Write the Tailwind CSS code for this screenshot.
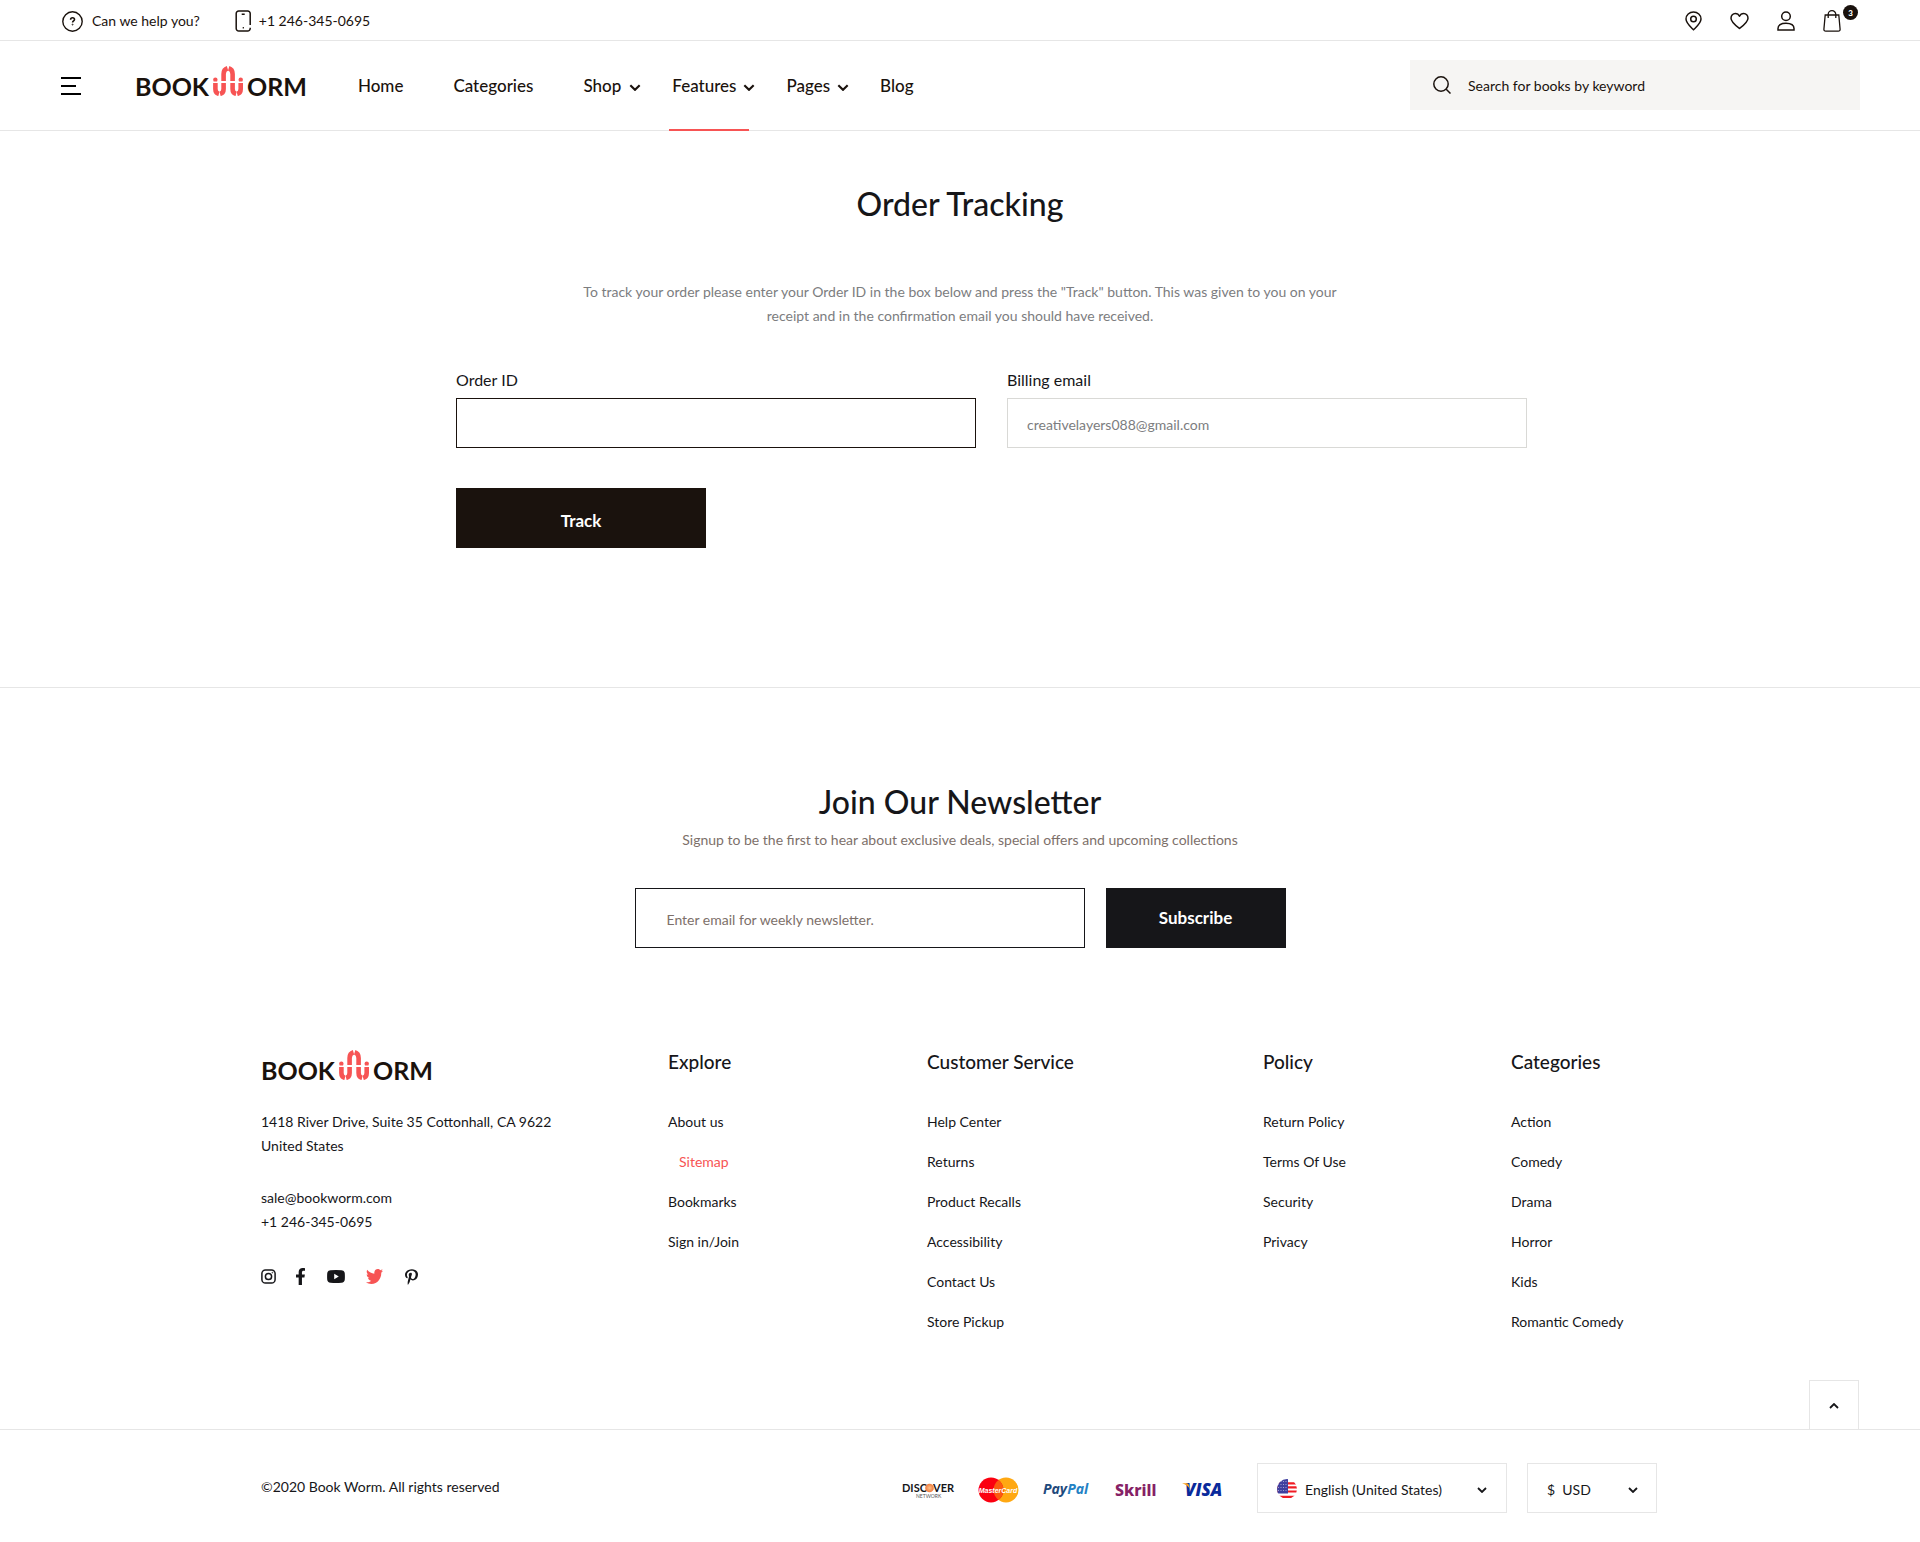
<!DOCTYPE html>
<html lang="en">
<head>
<meta charset="utf-8">
<meta name="viewport" content="width=device-width, initial-scale=1">
<title>Order Tracking – Book Worm</title>
<script src="https://cdn.jsdelivr.net/npm/@tailwindcss/browser@4"></script>
</head>
<body class="bg-white font-['Lato',sans-serif] text-sm leading-6 text-[#161619]">

<!-- Shared symbols -->
<svg class="hidden" aria-hidden="true">
  <symbol id="worm" viewBox="0 0 30 30">
    <g fill="none" stroke="#f75454" stroke-width="4.6">
      <path d="M10.600 15V8c0-3 1.300-5 3.900-5.800"/>
      <path d="M19.600 15V8c0-3-1.300-5-3.900-5.800"/>
      <path d="M2.400 17v6c0 2.700 1.200 4.300 3.500 4.900"/>
      <path d="M10.600 17v6c0 2.700-1.200 4.300-3.500 4.900"/>
      <path d="M19.600 17v6c0 2.700 1.200 4.300 3.500 4.900"/>
      <path d="M27.700 17v6c0 2.700-1.200 4.300-3.500 4.900"/>
    </g>
    <g fill="#f75454">
      <path d="M.15 13.800a2.200 2.200 0 0 1 4.400 0l-.5 1.700H.65z"/>
      <path d="M25.500 13.800a2.200 2.200 0 0 1 4.400 0l-.5 1.700h-3.400z"/>
    </g>
  </symbol>
  <symbol id="chevron" viewBox="0 0 10 6">
    <path d="M1 1l4 4 4-4" fill="none" stroke="currentColor" stroke-width="1.800"/>
  </symbol>
</svg>

<header>
  <div class="flex h-[41px] items-center justify-between border-b border-[#e6e6e6] pt-0.5 pr-[60px] pl-[62px] text-[#1a120d]">
    <div class="flex items-center">
      <a href="#" class="flex items-center gap-[9px]">
        <svg class="size-[21px]" viewBox="0 0 21 21" fill="none" stroke="currentColor" stroke-width="1.400"><circle cx="10.500" cy="10.500" r="9.700"/><path d="M8.600 8.700c0-1.200.8-1.900 1.950-1.900s1.950.7 1.950 1.700c0 1.500-1.900 1.500-1.900 3.100" stroke-width="1.600"/><circle cx="10.600" cy="13.600" r=".5" stroke-width=".9"/></svg>
        <span>Can we help you?</span>
      </a>
      <a href="tel:+12463450695" class="ml-[35px] flex items-center gap-2">
        <svg class="h-[22px] w-4" viewBox="0 0 16 22" fill="none" stroke="currentColor" stroke-width="1.500"><path d="M15.200 15V3.500a2.500 2.500 0 0 0-2.500-2.500h-9A2.500 2.500 0 0 0 1.200 3.500v15A2.500 2.500 0 0 0 3.700 21h9a2.500 2.500 0 0 0 2.500-2.500v-.8"/><path d="M6.700 4.200h3M7.700 17.700h1.200"/></svg>
        <span>+1 246-345-0695</span>
      </a>
    </div>
    <div class="flex items-center gap-7">
      <a href="#" aria-label="Store locations"><svg class="h-5 w-[17px]" viewBox="0 0 17 20" fill="none" stroke="currentColor" stroke-width="1.500"><path d="M8.500 18.800C5 15.300 1 12 1 8a7.500 7 0 0 1 15 0c0 4-4 7.300-7.500 10.800z"/><circle cx="8.500" cy="8" r="2.800"/></svg></a>
      <a href="#" aria-label="Wishlist"><svg class="h-[18px] w-[19px]" viewBox="0 0 19 18" fill="none" stroke="currentColor" stroke-width="1.500" stroke-linejoin="round"><path d="M9.500 16.500C5 13 1 10 1 6.200 1 3.300 3 1.400 5.300 1.400c1.900 0 3.400 1 4.200 2.900.8-1.900 2.300-2.900 4.200-2.900C16 1.400 18 3.300 18 6.200c0 3.800-4 6.800-8.500 10.300z"/></svg></a>
      <a href="#" aria-label="Account"><svg class="h-5 w-[18px]" viewBox="0 0 18 20" fill="none" stroke="currentColor" stroke-width="1.500"><circle cx="9" cy="5.200" r="4.300"/><path d="M1 19v-1.500C1 14 3.800 12.200 9 12.200s8 1.800 8 5.300V19z"/></svg></a>
      <a href="#" aria-label="Cart, 3 items" class="relative mr-[19px]">
        <svg class="h-[22px] w-[18px]" viewBox="0 0 18 22" fill="none" stroke="currentColor" stroke-width="1.300"><path d="M2.200 5h13.600l1.300 14.200c.1 1.200-.6 2-1.800 2H2.700c-1.200 0-1.900-.8-1.800-2z"/><path d="M5.200 8V4.500a3.800 3.800 0 0 1 7.600 0V8"/></svg>
        <span class="absolute -top-[5px] left-5 flex size-[15px] items-center justify-center rounded-full bg-[#1a120d] text-[8px] font-black leading-none text-white">3</span>
      </a>
    </div>
  </div>

  <div class="flex h-[90px] items-center border-b border-[#e6e6e6] pr-[60px] pl-[61px] text-[#1a120d]">
    <button type="button" aria-label="Menu" class="text-black">
      <svg class="h-[18px] w-5" viewBox="0 0 20 18" fill="none" stroke="currentColor" stroke-width="2"><path d="M0 1h20M0 9h15M0 17h20"/></svg>
    </button>
    <a href="#" aria-label="Book Worm" class="mb-2.5 ml-[54px] flex items-end text-[25px] leading-5 font-bold">
      <span>BOOK</span><svg class="mx-1 size-[30px]"><use href="#worm"/></svg><span>ORM</span>
    </a>
    <nav class="ml-[51px] flex h-full items-center text-[17px] font-medium">
      <a href="#">Home</a>
      <a href="#" class="ml-[50px]">Categories</a>
      <a href="#" class="ml-[50px] flex items-center gap-2">Shop <svg class="mt-1 h-[7px] w-3"><use href="#chevron"/></svg></a>
      <a href="#" aria-current="page" class="relative ml-[31px] flex h-full items-center gap-[7px]">Features <svg class="mt-1 h-[7px] w-3"><use href="#chevron"/></svg>
        <span class="absolute -bottom-px -left-[3px] h-0.5 w-20 bg-[#f75454]"></span></a>
      <a href="#" class="ml-[31px] flex items-center gap-[7px]">Pages <svg class="mt-1 h-[7px] w-3"><use href="#chevron"/></svg></a>
      <a href="#" class="ml-[31px]">Blog</a>
    </nav>
    <div class="mb-px ml-auto flex h-[50px] w-[450px] items-center gap-[17px] bg-[#f6f5f3] px-[23px]">
      <svg class="size-[18px] shrink-0" viewBox="0 0 18 18" fill="none" stroke="currentColor" stroke-width="1.500"><circle cx="8" cy="8" r="7.200"/><path d="M13.200 13.200l4.300 4.300"/></svg>
      <input type="search" aria-label="Search" placeholder="Search for books by keyword" class="mt-0.5 w-full bg-transparent outline-none placeholder:text-[#1a120d]">
    </div>
  </div>
</header>

<main class="border-b border-[#e6e6e6] px-6 pt-[53px] pb-[139px]">
  <h1 class="text-center text-[32px] leading-10 font-medium">Order Tracking</h1>
  <p class="mx-auto mt-14 max-w-[780px] text-center text-[#7c7d80]">To track your order please enter your Order ID in the box below and press the "Track" button. This was given to you on your receipt and in the confirmation email you should have received.</p>
  <div class="mt-10 pl-[63px]">
    <form class="mx-auto grid max-w-[1071px] grid-cols-2 gap-x-[31px]">
      <div class="flex flex-col gap-1.5">
        <label for="order-id" class="text-base">Order ID</label>
        <input id="order-id" type="text" class="h-[50px] w-full border border-[#1a120d] px-[19px] pt-0.5 outline-none">
      </div>
      <div class="flex flex-col gap-1.5">
        <label for="billing-email" class="text-base">Billing email</label>
        <input id="billing-email" type="email" placeholder="creativelayers088@gmail.com" class="h-[50px] w-full border border-[#d9d9d6] px-[19px] pt-0.5 outline-none placeholder:text-[#7c7d80]">
      </div>
      <button type="submit" class="mt-10 h-[60px] w-[250px] bg-[#1a120d] pt-1.5 text-[17px] font-bold text-white">Track</button>
    </form>
  </div>
</main>

<section class="px-6 pt-[94px] text-center">
  <h2 class="text-[32px] leading-10 font-medium">Join Our Newsletter</h2>
  <p class="mt-1.5 text-[#7d706a]">Signup to be the first to hear about exclusive deals, special offers and upcoming collections</p>
  <form class="mt-9 flex justify-center gap-[21px]">
    <input type="email" aria-label="Email address" placeholder="Enter email for weekly newsletter." class="h-[60px] w-[450px] border border-[#161619] px-[31px] pt-0.5 outline-none placeholder:text-[#7d706a]">
    <button type="submit" class="h-[60px] w-[180px] bg-[#161619] text-[17px] font-bold text-white">Subscribe</button>
  </form>
</section>

<footer>
  <div class="pr-0.5">
  <div class="mx-auto grid max-w-[1396px] grid-cols-[407fr_259fr_336fr_248fr_146fr] pt-[100px]">
    <div>
      <a href="#" aria-label="Book Worm" class="mt-0.5 flex items-end text-[25px] leading-5 font-bold text-[#1a120d]">
        <span>BOOK</span><svg class="mx-1 size-[30px]"><use href="#worm"/></svg><span>ORM</span>
      </a>
      <address class="mt-[30px] not-italic">1418 River Drive, Suite 35 Cottonhall, CA 9622<br>United States</address>
      <p class="mt-7"><a href="mailto:sale@bookworm.com">sale@bookworm.com</a><br><a href="tel:+12463450695">+1 246-345-0695</a></p>
      <div class="mt-[34px] flex items-center">
        <a href="#" aria-label="Instagram"><svg class="size-[15px]" viewBox="0 0 15 15" fill="none" stroke="currentColor" stroke-width="1.500"><rect x=".9" y=".9" width="13.200" height="13.200" rx="3.600"/><circle cx="7.500" cy="7.500" r="3.100"/><circle cx="11.400" cy="3.700" r=".4" stroke-width=".8"/></svg></a>
        <a href="#" aria-label="Facebook" class="ml-5"><svg class="h-[17px] w-[9px]" viewBox="22.890 0 274.220 512" preserveAspectRatio="none" fill="currentColor"><path d="M279.140 288l14.220-92.660h-88.910v-60.130c0-25.350 12.420-50.060 52.240-50.060h40.420V6.260S260.430 0 225.360 0c-73.220 0-121.080 44.380-121.080 124.720v70.620H22.890V288h81.390v224h100.170V288z"/></svg></a>
        <a href="#" aria-label="YouTube" class="ml-[22px]"><svg class="h-[13px] w-[18px]" viewBox="0 0 18 13" fill="currentColor"><path fill-rule="evenodd" d="M3.500.2Q9-.2 14.500.2 17.600.4 17.800 3.500q.2 3 0 6-.2 3.100-3.300 3.300-5.500.4-11 0Q.4 12.600.2 9.500q-.2-3 0-6Q.4.400 3.500.2zM7.200 3.800v5.400l4.600-2.700z"/></svg></a>
        <a href="#" aria-label="Twitter" class="ml-[21px] text-[#f75454]"><svg class="h-[15px] w-[17px]" viewBox="0 48 512 416" preserveAspectRatio="none" fill="currentColor"><path d="M459.370 151.716c.325 4.548.325 9.097.325 13.645 0 138.720-105.583 298.558-298.558 298.558-59.452 0-114.680-17.219-161.137-47.106 8.447.974 16.568 1.299 25.340 1.299 49.055 0 94.213-16.568 130.274-44.832-46.132-.975-84.792-31.188-98.112-72.772 6.498.974 12.995 1.624 19.818 1.624 9.421 0 18.843-1.300 27.614-3.573-48.081-9.747-84.143-51.980-84.143-102.985v-1.299c13.969 7.797 30.214 12.670 47.431 13.319-28.264-18.843-46.781-51.005-46.781-87.391 0-19.492 5.197-37.360 14.294-52.954 51.655 63.675 129.300 105.258 216.365 109.807-1.624-7.797-2.599-15.918-2.599-24.040 0-57.828 46.782-104.934 104.934-104.934 30.213 0 57.502 12.670 76.670 33.137 23.715-4.548 46.456-13.320 66.599-25.340-7.798 24.366-24.366 44.833-46.132 57.827 21.117-2.273 41.584-8.122 60.426-16.243-14.292 20.791-32.161 39.308-52.628 54.253z"/></svg></a>
        <a href="#" aria-label="Pinterest" class="ml-[22px]"><svg class="h-4 w-[13px]" viewBox="0 0 384 512" preserveAspectRatio="none" fill="currentColor"><path d="M204 6.500C101.400 6.500 0 74.900 0 185.600 0 256 39.600 296 63.600 296c9.900 0 15.600-27.600 15.600-35.400 0-9.300-23.700-29.100-23.700-67.800 0-80.400 61.200-137.400 140.400-137.400 68.100 0 118.500 38.700 118.500 109.800 0 53.100-21.300 152.700-90.300 152.700-24.900 0-46.200-18-46.200-43.800 0-37.800 26.400-74.400 26.400-113.400 0-66.200-93.900-54.200-93.900 25.800 0 16.800 2.100 35.400 9.600 50.700-13.800 59.400-42 147.900-42 209.100 0 18.900 2.700 37.500 4.500 56.400 3.400 3.800 1.700 3.400 6.900 1.500 50.400-69 48.600-82.500 71.400-172.800 12.300 23.400 44.100 36 69.300 36 106.200 0 153.900-103.500 153.900-196.800C384 71.300 298.200 6.500 204 6.500z"/></svg></a>
      </div>
    </div>
    <div>
      <h3 class="text-[19px] leading-7 font-medium">Explore</h3>
      <ul class="mt-[34px] space-y-4">
        <li><a href="#">About us</a></li>
        <li class="pl-[11px] text-[#f75454]"><a href="#">Sitemap</a></li>
        <li><a href="#">Bookmarks</a></li>
        <li><a href="#">Sign in/Join</a></li>
      </ul>
    </div>
    <div>
      <h3 class="text-[19px] leading-7 font-medium">Customer Service</h3>
      <ul class="mt-[34px] space-y-4">
        <li><a href="#">Help Center</a></li>
        <li><a href="#">Returns</a></li>
        <li><a href="#">Product Recalls</a></li>
        <li><a href="#">Accessibility</a></li>
        <li><a href="#">Contact Us</a></li>
        <li><a href="#">Store Pickup</a></li>
      </ul>
    </div>
    <div>
      <h3 class="text-[19px] leading-7 font-medium">Policy</h3>
      <ul class="mt-[34px] space-y-4">
        <li><a href="#">Return Policy</a></li>
        <li><a href="#">Terms Of Use</a></li>
        <li><a href="#">Security</a></li>
        <li><a href="#">Privacy</a></li>
      </ul>
    </div>
    <div>
      <h3 class="text-[19px] leading-7 font-medium">Categories</h3>
      <ul class="mt-[34px] space-y-4">
        <li><a href="#">Action</a></li>
        <li><a href="#">Comedy</a></li>
        <li><a href="#">Drama</a></li>
        <li><a href="#">Horror</a></li>
        <li><a href="#">Kids</a></li>
        <li><a href="#">Romantic Comedy</a></li>
      </ul>
    </div>
  </div>
  </div>

  <div class="mt-[46px] flex justify-end border-b border-[#e6e6e6] pr-[61px]">
    <button type="button" aria-label="Back to top" class="flex h-[49px] w-[50px] items-center justify-center border border-b-0 border-[#e6e6e6]">
      <svg class="mt-0.5 h-1.5 w-2.5 rotate-180"><use href="#chevron"/></svg>
    </button>
  </div>

  <div class="pr-0.5">
  <div class="mx-auto flex max-w-[1396px] items-center pt-[33px] pb-[29px]">
    <p class="mb-0.5">©2020 Book Worm. All rights reserved</p>
    <div class="mt-1 ml-auto flex items-center gap-6">
      <svg class="h-5 w-[52px] overflow-visible" viewBox="0 0 52 20" role="img" aria-label="Discover Network">
        <defs><radialGradient id="disc"><stop offset="0" stop-color="#fbc08c"/><stop offset="1" stop-color="#f0793a"/></radialGradient></defs>
        <g font-family="Lato, sans-serif" font-weight="700" font-size="11" fill="#161619"><text x="0" y="12">DISC</text><text x="31" y="12">VER</text></g>
        <circle cx="27.500" cy="8" r="4.300" fill="url(#disc)"/>
        <text x="14" y="17.500" font-family="Lato, sans-serif" font-size="5" fill="#555">NETWORK</text>
      </svg>
      <svg class="h-[26px] w-[41px] overflow-visible" viewBox="0 0 41 26" role="img" aria-label="MasterCard">
        <circle cx="28" cy="13" r="12.500" fill="#ffa812"/><circle cx="13" cy="13" r="12.500" fill="#fb0010"/>
        <path d="M20.500 3a12.500 12.500 0 0 1 0 20 12.500 12.500 0 0 1 0-20z" fill="#fb5a10"/>
        <text x="20" y="15.800" text-anchor="middle" font-family="'Liberation Sans', sans-serif" font-size="7" font-weight="700" font-style="italic" fill="#fff">MasterCard</text>
      </svg>
      <svg class="h-5 w-12 overflow-visible" viewBox="0 0 48 20" role="img" aria-label="PayPal">
        <g font-family="'Open Sans', sans-serif" font-size="14" font-weight="700" font-style="italic"><text x="0" y="13.500"><tspan fill="#1f4a7c">Pay</tspan><tspan fill="#2481c4">Pal</tspan></text></g>
      </svg>
      <svg class="h-5 w-[43px] overflow-visible" viewBox="0 0 43 20" role="img" aria-label="Skrill">
        <text x="0" y="15.500" font-family="'Noto Sans', sans-serif" font-size="16" font-weight="800" fill="#862165">Skrill</text>
      </svg>
      <svg class="h-5 w-[43px] overflow-visible" viewBox="0 0 43 20" role="img" aria-label="Visa">
        <text x="3" y="15.500" font-family="'Open Sans', sans-serif" font-size="17" font-weight="800" font-style="italic" fill="#0a2a9b">VISA</text>
        <path d="M0 3.300h5q1.500 0 1.800 1.500L7.800 9Q5.500 4.800 0 3.300z" fill="#f7a01d"/>
      </svg>
    </div>
    <div class="relative ml-8 h-[50px] w-[250px]">
      <svg class="pointer-events-none absolute top-4 left-5 size-5" viewBox="0 0 20 20" aria-hidden="true">
        <defs><clipPath id="round"><circle cx="10" cy="10" r="10"/></clipPath></defs>
        <g clip-path="url(#round)"><path fill="#fff" d="M0 0h20v20H0z"/><path d="M0 4.300h20M0 8.400h20M0 12.500h20M0 17.800h20" stroke="#f01c24" stroke-width="2.200"/><path fill="#3f3f9f" d="M0 0h11v14.500H0z"/><path d="M1 2.500h10M1 5.500h10M1 8.500h10M1 11.500h10" stroke="#b9b9e0" stroke-width=".8" stroke-dasharray="1 1.500"/></g>
      </svg>
      <select aria-label="Language" class="size-full appearance-none border border-[#e6e6e6] bg-transparent pt-1 pl-[47px] outline-none"><option>English (United States)</option></select>
      <svg class="pointer-events-none absolute top-6 right-5 h-1.5 w-2.5"><use href="#chevron"/></svg>
    </div>
    <div class="relative ml-5 h-[50px] w-[130px]">
      <select aria-label="Currency" class="size-full appearance-none border border-[#e6e6e6] bg-transparent pt-1 pl-[19px] outline-none"><option>$ &nbsp;USD</option></select>
      <svg class="pointer-events-none absolute top-6 right-[19px] h-1.5 w-2.5"><use href="#chevron"/></svg>
    </div>
  </div>
  </div>
</footer>
</body>
</html>
